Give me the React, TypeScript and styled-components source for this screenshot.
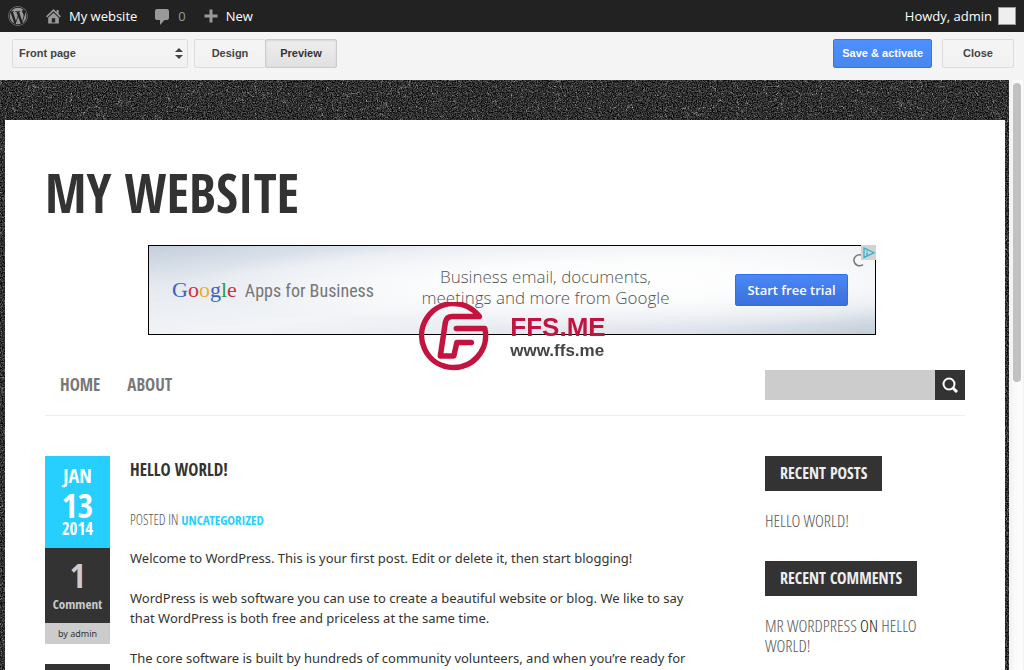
import React from "react";
import styled, { createGlobalStyle } from "styled-components";
import { FaWordpress } from "react-icons/fa";

const heavy = `"Open Sans Condensed", "Roboto Condensed", sans-serif`;
const light = `"Open Sans Condensed Light", "Open Sans Condensed", "Roboto Condensed", sans-serif`;
const narrow = `"Roboto Condensed", "Liberation Sans Narrow", sans-serif`;

const GlobalStyle = createGlobalStyle`
  *, *::before, *::after { box-sizing: border-box; }
  body { margin: 0; background: #fff; overflow: hidden; font-family: "Noto Sans", sans-serif; color: #333; }
  h1, h2, h3, p, ul { margin: 0; padding: 0; }
  ul { list-style: none; }
  a { color: inherit; text-decoration: none; }
  button, input, select { font: inherit; margin: 0; border-radius: 0; }
`;

const Screen = styled.div`
  display: flex;
  flex-direction: column;
  height: 100vh;
`;

const AdminBar = styled.header`
  flex: none;
  display: flex;
  align-items: center;
  height: 32px;
  padding: 0 8px;
  background: #222;
  color: #eee;
  font: 13px/32px "Open Sans", sans-serif;
`;

const AdminLink = styled.a<{ $muted?: boolean }>`
  display: flex;
  align-items: center;
  gap: ${(p) => (p.$muted ? 9 : 8)}px;
  margin-right: 18px;
  color: ${(p) => (p.$muted ? "#999" : "#fff")};
  font-weight: ${(p) => (p.$muted ? 400 : 500)};
  svg { color: #999; fill: #999; }
`;

const Account = styled(AdminLink)`
  gap: 6px;
  margin: 0 0 0 auto;
`;

const Avatar = styled.span`
  width: 18px;
  height: 18px;
  border: 1px solid #999;
  background: #eee;
`;

const Toolbar = styled.div`
  flex: none;
  display: flex;
  align-items: flex-start;
  height: 48px;
  padding: 7px 10px 0 12px;
  background: #f4f4f4;
  font: bold 11px/27px "Liberation Sans", sans-serif;
  color: #444;
`;

const Picker = styled.label`
  position: relative;
  width: 176px;
  margin-right: 6px;
  svg { position: absolute; right: 5px; top: 8px; pointer-events: none; }
`;

const Select = styled.select`
  appearance: none;
  display: block;
  width: 100%;
  height: 29px;
  padding: 0 6px;
  border: 1px solid #dcdcdc;
  border-radius: 2px;
  background: linear-gradient(#f5f5f5, #f1f1f1);
  color: #444;
`;

const ToolButton = styled.button<{ $kind?: "active" | "primary" }>`
  height: 29px;
  min-width: 72px;
  padding: 0 8px;
  border: 1px solid ${(p) => (p.$kind === "primary" ? "#3079ed" : p.$kind === "active" ? "#ccc" : "#dcdcdc")};
  border-radius: 2px;
  color: ${(p) => (p.$kind === "primary" ? "#fff" : p.$kind === "active" ? "#333" : "#444")};
  background: ${(p) =>
    p.$kind === "primary"
      ? "linear-gradient(#4d90fe, #4787ed)"
      : p.$kind === "active"
        ? "linear-gradient(#eee, #e0e0e0)"
        : "linear-gradient(#f5f5f5, #f1f1f1)"};
  box-shadow: ${(p) => (p.$kind === "active" ? "inset 0 1px 2px rgba(0,0,0,.1)" : "none")};
`;

const Segmented = styled.div`
  display: flex;
  button + button { margin-left: -1px; }
`;

const Actions = styled.div`
  display: flex;
  gap: 10px;
  margin-left: auto;
`;

const Viewport = styled.div`
  flex: 1;
  min-height: 0;
  display: flex;
`;

const Canvas = styled.div`
  flex: 1;
  min-width: 0;
  display: grid;
  grid-template: 100% / 100%;
  overflow: hidden;
  > * { grid-area: 1 / 1; }
`;

const Leather = styled.svg`
  width: 100%;
  height: 100%;
`;

const Scrollbar = styled.div`
  width: 15px;
  padding: 3px 3px 0 4px;
  background: linear-gradient(90deg, #f0f0f0, #fafafa 40%, #fcfcfc 90%, #eee);
`;

const Thumb = styled.div`
  height: 51%;
  border-radius: 4px;
  background: #c1c1c1;
`;

const Site = styled.div`
  margin: 40px 4px 0 5px;
  padding: 40px 40px 0;
  background: #fff;
  overflow: hidden;
`;

const SiteTitle = styled.h1`
  height: 85px;
  font: bold 53px/66px ${heavy};
  white-space: nowrap;
`;

const Ad = styled.aside`
  position: relative;
  display: flex;
  align-items: center;
  width: 728px;
  max-width: 100%;
  height: 90px;
  margin: 0 auto;
  padding: 0 27px 0 23px;
  border: 1px solid #000;
  background:
    radial-gradient(ellipse at 66% 42%, #fff 0, rgba(255,255,255,.8) 28%, rgba(255,255,255,0) 64%),
    linear-gradient(172deg, #c3cedb 0, #e6eaf0 22%, #f2f4f7 50%, #dfe4ec 85%, #c3ced8 100%);
`;

const AdSlot = styled.div`
  padding-left: 14px;
`;

const Brand = styled.div`
  display: flex;
  align-items: baseline;
  gap: 8px;
  width: 220px;
  font: 18px/24px ${narrow};
  color: #777;
  white-space: nowrap;
`;

const Wordmark = styled.span`
  font: 22px/24px "Liberation Serif", serif;
`;

const Letter = styled.span<{ $tone: string }>`
  color: ${(p) => p.$tone};
`;

const AdCopy = styled.p`
  flex: 1;
  padding: 0 36px 6px 0;
  font: 300 17px/21px "Open Sans Light", "Open Sans", sans-serif;
  color: #555;
  text-align: center;
  white-space: nowrap;
`;

const AdButton = styled.button`
  width: 113px;
  height: 32px;
  padding: 0;
  border: 1px solid #2f6ef0;
  border-radius: 2px;
  background: linear-gradient(#4a88f6, #3a70dd);
  color: #fff;
  font: 600 13px/30px "Open Sans", sans-serif;
  white-space: nowrap;
`;

const AdBadge = styled.svg`
  position: absolute;
  top: -1px;
  right: -1px;
`;

const NavBar = styled.nav`
  display: flex;
  align-items: center;
  justify-content: space-between;
  height: 81px;
  padding: 20px 0 0 15px;
  border-bottom: 1px solid #eee;
`;

const NavLinks = styled.ul`
  display: flex;
  gap: 27px;
  font: bold 17px/30px ${heavy};
  color: #777;
`;

const Search = styled.form`
  display: flex;
  width: 200px;
  height: 30px;
`;

const SearchInput = styled.input`
  flex: 1;
  min-width: 0;
  border: 0;
  padding: 0 8px;
  background: #ccc;
`;

const SearchButton = styled.button`
  display: grid;
  place-items: center;
  width: 30px;
  padding: 0;
  border: 0;
  background: #333;
`;

const Columns = styled.main`
  display: flex;
  justify-content: space-between;
  gap: 60px;
  padding-top: 40px;
`;

const Post = styled.article`
  display: flex;
  gap: 20px;
  max-width: 660px;
`;

const Meta = styled.div`
  flex: none;
  display: flex;
  flex-direction: column;
  width: 65px;
  text-align: center;
`;

const MetaBlock = styled.div<{ $tone: "date" | "count" }>`
  display: flex;
  flex-direction: column;
  height: ${(p) => (p.$tone === "date" ? 92 : 75)}px;
  padding-top: ${(p) => (p.$tone === "date" ? 6 : 8)}px;
  background: ${(p) => (p.$tone === "date" ? "#27cfff" : "#333")};
  color: ${(p) => (p.$tone === "date" ? "#fff" : "#ccc")};
  font-family: ${heavy};
  font-weight: bold;
`;

const MetaLine = styled.span<{ $size: number; $line: number }>`
  font-size: ${(p) => p.$size}px;
  line-height: ${(p) => p.$line}px;
`;

const Author = styled.a`
  margin-bottom: 20px;
  background: #ccc;
  font-size: 9px;
  line-height: 21px;
`;

const ShareBlock = styled.div`
  height: 92px;
  background: #333;
`;

const Body = styled.div`
  flex: 1;
  font: 13px/20px "Noto Sans", sans-serif;
  p { margin-bottom: 20px; }
`;

const PostTitle = styled.h2`
  margin-bottom: 26px;
  font: bold 17px/28px ${heavy};
`;

const Category = styled.div`
  margin-bottom: 18px;
  font: 300 14px/20px ${light};
  color: #555;
  a { color: #27cfff; font: bold 13px/19px ${heavy}; }
`;

const Sidebar = styled.aside`
  flex: none;
  width: 200px;
  font: 300 17px/20px ${light};
  color: #555;
`;

const Widget = styled.section`
  margin-bottom: 30px;
`;

const WidgetTitle = styled.h3`
  display: table;
  margin-bottom: 20px;
  padding: 0 15px;
  background: #333;
  color: #eee;
  font: bold 16px/35px ${heavy};
`;

const CommentLine = styled.p`
  padding-right: 30px;
`;

const Dark = styled.span`
  color: #111;
`;

const Watermark = styled.div`
  position: fixed;
  top: 50%;
  left: 50%;
  transform: translate(-50%, -50%);
  display: flex;
  align-items: center;
  gap: 21px;
  padding-top: 4px;
  color: #c2143f;
  pointer-events: none;
  font: bold 26px/28px "Liberation Sans", sans-serif;
`;

const WatermarkUrl = styled.small`
  display: block;
  color: #444;
  font-size: 17px;
  line-height: 20px;
`;

const GOOGLE: [string, string][] = [
  ["G", "#3b62c4"], ["o", "#d0303b"], ["o", "#eeb01c"], ["g", "#3b62c4"], ["l", "#2a9c46"], ["e", "#d0303b"],
];

export default function App() {
  return (
    <>
      <GlobalStyle />
      <Screen>
        <AdminBar>
          <AdminLink href="#" aria-label="WordPress">
            <FaWordpress size={20} />
          </AdminLink>
          <AdminLink href="#">
            <svg width="15" height="16" viewBox="0 0 16 16" aria-hidden="true">
              <path d="M8 0.500 0 8.300l1.200 1.200L8 3l6.800 6.500L16 8.300l-2.500-2.500V1.500h-2.200v2.100zM2.300 9.800V16h11.400V9.800L8 4.500zM6.200 10.300h3.600V15H6.200z" fillRule="evenodd" />
            </svg>
            My website
          </AdminLink>
          <AdminLink href="#" $muted>
            <svg width="14" height="17" viewBox="0 0 14 17" aria-hidden="true">
              <path d="M2 1h10q2 0 2 2v7q0 2-2 2H9.500L5 17v-5H2q-2 0-2-2V3q0-2 2-2z" />
            </svg>
            0
          </AdminLink>
          <AdminLink href="#">
            <svg width="14" height="14" viewBox="0 0 14 14" aria-hidden="true">
              <path d="M5.500 0.500h3v5h5v3h-5v5h-3v-5h-5v-3h5z" />
            </svg>
            New
          </AdminLink>
          <Account href="#">
            Howdy, admin
            <Avatar />
          </Account>
        </AdminBar>

        <Toolbar>
          <Picker>
            <Select aria-label="Page">
              <option>Front page</option>
            </Select>
            <svg width="8" height="13" viewBox="0 0 8 13" fill="#444" aria-hidden="true">
              <path d="M4 1l4 4H0zM4 12l4-4H0z" />
            </svg>
          </Picker>
          <Segmented>
            <ToolButton type="button">Design</ToolButton>
            <ToolButton type="button" $kind="active">Preview</ToolButton>
          </Segmented>
          <Actions>
            <ToolButton type="button" $kind="primary">Save &amp; activate</ToolButton>
            <ToolButton type="button">Close</ToolButton>
          </Actions>
        </Toolbar>

        <Viewport>
          <Canvas>
            <Leather aria-hidden="true">
              <filter id="leather" x="0" y="0" width="100%" height="100%" colorInterpolationFilters="sRGB">
                <feTurbulence type="fractalNoise" baseFrequency="0.8" numOctaves="2" seed="8" />
                <feColorMatrix type="matrix" values="0.75 0.25 0 0 -0.32  0.75 0.25 0 0 -0.32  0.75 0.25 0 0 -0.32  0 0 0 0 1" result="grain" />
                <feTurbulence type="turbulence" baseFrequency="0.09 0.07" numOctaves="2" seed="3" />
                <feColorMatrix type="matrix" values="-3 0 0 0 0.3  -3 0 0 0 0.3  -3 0 0 0 0.3  0 0 0 0 1" result="fibres" />
                <feComposite in="grain" in2="fibres" operator="arithmetic" k1="1.5" k2="1" k3="0.4" k4="0" />
              </filter>
              <rect width="100%" height="100%" fill="#333" filter="url(#leather)" />
            </Leather>
            <Site>
              <SiteTitle>MY WEBSITE</SiteTitle>
              <AdSlot>
                <Ad>
                  <Brand>
                    <Wordmark>
                      {GOOGLE.map(([letter, tone], i) => (
                        <Letter key={i} $tone={tone}>{letter}</Letter>
                      ))}
                    </Wordmark>
                    Apps for Business
                  </Brand>
                  <AdCopy>
                    Business email, documents,
                    <br />
                    meetings and more from Google
                  </AdCopy>
                  <AdButton type="button">Start free trial</AdButton>
                  <AdBadge width="24" height="24" viewBox="0 0 24 24" aria-hidden="true">
                    <path d="M9 10A5.500 5.500 0 1 0 11 19.500" fill="none" stroke="#777" strokeWidth="1.500" />
                    <rect x="9" width="15" height="15" fill="#d2d2d2" />
                    <path d="M12 3v9.500l10-4.700z" fill="none" stroke="#24b3d3" strokeWidth="1.200" />
                    <path d="M15 5.500v1M15 7.500v3.500" stroke="#24b3d3" strokeWidth="1.300" />
                  </AdBadge>
                </Ad>
              </AdSlot>
              <NavBar>
                <NavLinks>
                  <li><a href="#">HOME</a></li>
                  <li><a href="#">ABOUT</a></li>
                </NavLinks>
                <Search>
                  <SearchInput type="search" aria-label="Search" />
                  <SearchButton type="button" aria-label="Search">
                    <svg width="16" height="16" viewBox="0 0 16 16" fill="none" stroke="#fff" aria-hidden="true">
                      <circle cx="7" cy="7" r="5.500" strokeWidth="2" />
                      <path d="M11 11l4 4" strokeWidth="3" />
                    </svg>
                  </SearchButton>
                </Search>
              </NavBar>
              <Columns>
                <Post>
                  <Meta>
                    <MetaBlock $tone="date">
                      <MetaLine $size={20} $line={28}>JAN</MetaLine>
                      <MetaLine $size={34} $line={30}>13</MetaLine>
                      <MetaLine $size={17} $line={18}>2014</MetaLine>
                    </MetaBlock>
                    <MetaBlock $tone="count">
                      <MetaLine $size={34} $line={38}>1</MetaLine>
                      <MetaLine $size={13} $line={20}>Comment</MetaLine>
                    </MetaBlock>
                    <Author href="#">by admin</Author>
                    <ShareBlock />
                  </Meta>
                  <Body>
                    <PostTitle>HELLO WORLD!</PostTitle>
                    <Category>
                      POSTED IN <a href="#">UNCATEGORIZED</a>
                    </Category>
                    <p>Welcome to WordPress. This is your first post. Edit or delete it, then start blogging!</p>
                    <p>
                      WordPress is web software you can use to create a beautiful website or blog. We like to say
                      <br />
                      that WordPress is both free and priceless at the same time.
                    </p>
                    <p>The core software is built by hundreds of community volunteers, and when you’re ready for</p>
                  </Body>
                </Post>
                <Sidebar>
                  <Widget>
                    <WidgetTitle>RECENT POSTS</WidgetTitle>
                    <a href="#">HELLO WORLD!</a>
                  </Widget>
                  <Widget>
                    <WidgetTitle>RECENT COMMENTS</WidgetTitle>
                    <CommentLine>
                      <a href="#">MR WORDPRESS</a> <Dark>ON</Dark> <a href="#">HELLO WORLD!</a>
                    </CommentLine>
                  </Widget>
                </Sidebar>
              </Columns>
            </Site>
          </Canvas>
          <Scrollbar>
            <Thumb />
          </Scrollbar>
        </Viewport>
      </Screen>

      <Watermark>
        <svg
          width="71"
          height="70"
          viewBox="0 0 71 70"
          fill="none"
          stroke="#c2143f"
          strokeWidth="5.500"
          strokeLinecap="round"
          strokeLinejoin="round"
          aria-hidden="true"
        >
          <path d="M38 26.500H66.500A32 32 0 1 1 61 14.500H34q-6 0-7 6l-5 33.500h13.500l3-13.500H53" />
        </svg>
        <div>
          FFS.ME
          <WatermarkUrl>www.ffs.me</WatermarkUrl>
        </div>
      </Watermark>
    </>
  );
}
